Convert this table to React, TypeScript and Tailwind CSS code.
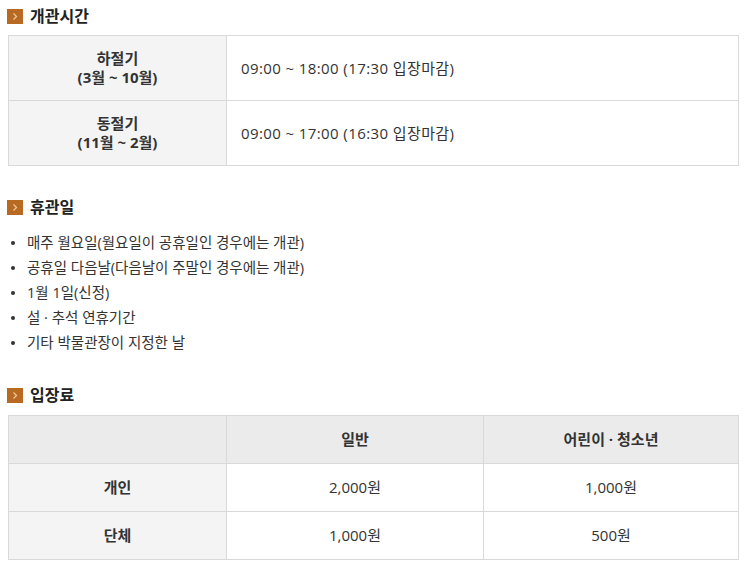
import React from "react";

const font = { fontFamily: '"Open Sans", "Noto Sans CJK KR", "Noto Sans", sans-serif' };

function Icon() {
  return (
    <svg width="16" height="15" viewBox="0 0 16 15" className="shrink-0">
      <rect width="16" height="15" fill="#b86a22" />
      <path d="M6.5 4.5 L9.5 7.5 L6.5 10.5" stroke="#f0c99a" strokeWidth="1.2" fill="none" />
    </svg>
  );
}

function Heading({ children, className = "" }: { children: React.ReactNode; className?: string }) {
  return (
    <div className={`flex items-center gap-[7px] pl-[7px] h-[20px] ${className}`}>
      <Icon />
      <span className="text-[16px] font-bold leading-[20px] text-[#222]">{children}</span>
    </div>
  );
}

export default function App() {
  const items = [
    "매주 월요일(월요일이 공휴일인 경우에는 개관)",
    "공휴일 다음날(다음날이 주말인 경우에는 개관)",
    "1월 1일(신정)",
    "설 · 추석 연휴기간",
    "기타 박물관장이 지정한 날",
  ];
  return (
    <div className="w-[750px] h-[571px] bg-white text-[#333] overflow-hidden" style={font}>
      <Heading className="mt-[6px]">개관시간</Heading>
      <div className="ml-[8px] mt-[9px] w-[731px] border border-[#d9d9d9]">
        {[
          ["하절기", "(3월 ~ 10월)", "09:00 ~ 18:00 (17:30 입장마감)"],
          ["동절기", "(11월 ~ 2월)", "09:00 ~ 17:00 (16:30 입장마감)"],
        ].map((r, i) => (
          <div key={i} className={`grid grid-cols-[218px_1fr] ${i > 0 ? "h-[65px] border-t border-[#d9d9d9]" : "h-[64px]"}`}>
            <div className="bg-[#f4f4f4] border-r border-[#d9d9d9] flex flex-col items-center justify-center text-[15px] font-bold leading-[19px] text-[#333]">
              <span>{r[0]}</span>
              <span>{r[1]}</span>
            </div>
            <div className="flex items-center pl-[14px] text-[15px] tracking-[0.4px] text-[#333]">{r[2]}</div>
          </div>
        ))}
      </div>

      <Heading className="mt-[31px]">휴관일</Heading>
      <ul className="mt-[13px] pl-[11px]">
        {items.map((t) => (
          <li key={t} className="flex items-center h-[25px] text-[14.5px] text-[#333]">
            <span className="w-[4px] h-[4px] rounded-full bg-[#333] mr-[12px]" />
            {t}
          </li>
        ))}
      </ul>

      <Heading className="mt-[30px]">입장료</Heading>
      <div className="ml-[8px] mt-[10px] w-[731px] border border-[#d9d9d9] text-[15px] text-[#333]">
        <div className="grid grid-cols-[218px_257px_1fr] h-[47px] bg-[#ebebeb] font-bold">
          <div className="border-r border-[#d9d9d9]" />
          <div className="border-r border-[#d9d9d9] flex items-center justify-center">일반</div>
          <div className="flex items-center justify-center">어린이 · 청소년</div>
        </div>
        {[
          ["개인", "2,000원", "1,000원"],
          ["단체", "1,000원", "500원"],
        ].map((r) => (
          <div key={r[0]} className="grid grid-cols-[218px_257px_1fr] h-[48px] border-t border-[#d9d9d9]">
            <div className="bg-[#f4f4f4] border-r border-[#d9d9d9] flex items-center justify-center font-bold">{r[0]}</div>
            <div className="border-r border-[#d9d9d9] flex items-center justify-center">{r[1]}</div>
            <div className="flex items-center justify-center">{r[2]}</div>
          </div>
        ))}
      </div>
    </div>
  );
}
